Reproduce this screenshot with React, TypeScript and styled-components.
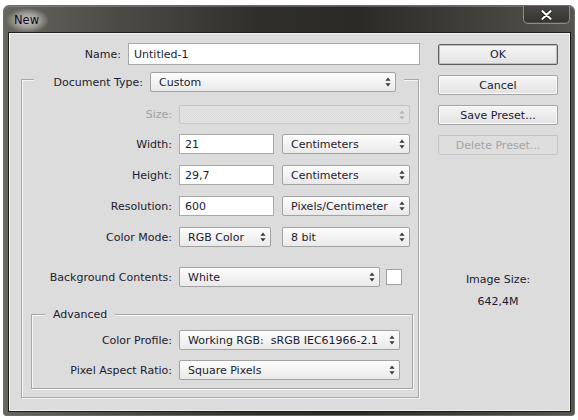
import React from "react";
import styled, { createGlobalStyle } from "styled-components";

const GlobalStyle = createGlobalStyle`
html, body {
	margin: 0;
	padding: 0;
	background: #ffffff;
}
body {
	font-family: "DejaVu Sans", "Liberation Sans", sans-serif;
	font-size: 11px;
	color: #1b1b2f;
}
`

const Arrows = ({ disabled }: { disabled?: boolean }) => (
	<svg width="6" height="10" viewBox="0 0 6 10">
		<path d="M3 0.5 L5.6 3.8 L0.4 3.8 Z M0.4 6.2 L5.6 6.2 L3 9.5 Z" fill={disabled ? "#b4b4b4" : "#3a3a3a"} />
	</svg>
);

const CloseGlyph = () => (
	<svg width="11" height="10" viewBox="0 0 11 10">
		<path d="M1.5 1.2 L9.5 8.8 M9.5 1.2 L1.5 8.8" stroke="#1a1a18" strokeWidth="3.6" strokeLinecap="round" />
		<path d="M1.5 1.2 L9.5 8.8 M9.5 1.2 L1.5 8.8" stroke="#ffffff" strokeWidth="2.2" strokeLinecap="round" />
	</svg>
);

export default function App() {
	return (
		<>
			<GlobalStyle />
			<Window>
				<TitleBar>
					<Title>New</Title>
					<CloseButton><CloseGlyph /></CloseButton>
				</TitleBar>
				<Client>
					<LeftColumn>
						<NameRow>
							<NameLabel>Name:</NameLabel>
							<TextField $w={292} $h={22} readOnly value="Untitled-1" />
						</NameRow>
						<GroupBox>
							<GroupHeader>
								<HeaderLabel>Document Type:</HeaderLabel>
								<Select $w={246}>
									<span>Custom</span>
									<Arrows />
								</Select>
							</GroupHeader>

							<FormRow $top={13} $label={150}>
								<Label $disabled>Size:</Label>
								<Select $w={231} $h={19} $disabled>
									<span />
									<Arrows disabled />
								</Select>
							</FormRow>
							<FormRow $top={10} $label={150}>
								<Label>Width:</Label>
								<Controls>
									<TextField $w={95} readOnly value="21" />
									<Select $w={128}>
										<span>Centimeters</span>
										<Arrows />
									</Select>
								</Controls>
							</FormRow>
							<FormRow $top={11} $label={150}>
								<Label>Height:</Label>
								<Controls>
									<TextField $w={95} readOnly value="29,7" />
									<Select $w={128}>
										<span>Centimeters</span>
										<Arrows />
									</Select>
								</Controls>
							</FormRow>
							<FormRow $top={11} $label={150}>
								<Label>Resolution:</Label>
								<Controls>
									<TextField $w={95} readOnly value="600" />
									<Select $w={128}>
										<span>Pixels/Centimeter</span>
										<Arrows />
									</Select>
								</Controls>
							</FormRow>
							<FormRow $top={11} $label={150}>
								<Label>Color Mode:</Label>
								<Controls>
									<Select $w={92}>
										<span>RGB Color</span>
										<Arrows />
									</Select>
									<Select $w={128} $gap={11}>
										<span>8 bit</span>
										<Arrows />
									</Select>
								</Controls>
							</FormRow>
							<FormRow $top={20} $label={150}>
								<Label>Background Contents:</Label>
								<Controls>
									<Select $w={201}>
										<span>White</span>
										<Arrows />
									</Select>
									<Swatch />
								</Controls>
							</FormRow>

							<AdvancedBox>
								<Legend>Advanced</Legend>
								<FormRow $top={8} $label={140}>
									<Label>Color Profile:</Label>
									<Select $w={221}>
										<span>Working RGB:&nbsp; sRGB IEC61966-2.1</span>
										<Arrows />
									</Select>
								</FormRow>
								<FormRow $top={10} $label={140}>
									<Label>Pixel Aspect Ratio:</Label>
									<Select $w={221}>
										<span>Square Pixels</span>
										<Arrows />
									</Select>
								</FormRow>
							</AdvancedBox>
						</GroupBox>
					</LeftColumn>

					<RightColumn>
						<Button $default>OK</Button>
						<Button>Cancel</Button>
						<Button>Save Preset...</Button>
						<Button disabled>Delete Preset...</Button>
						<SizeInfo>
							<span>Image Size:</span>
							<span>642,4M</span>
						</SizeInfo>
					</RightColumn>
				</Client>
			</Window>
		</>
	);
}

const Window = styled.div`
box-sizing: border-box;
width: 572px;
height: 411px;
margin: 5px 0 0 3px;
padding: 0 3px 3px 4px;
border: 1px solid #6e6c67;
border-radius: 6px 6px 3px 3px;
display: flex;
flex-direction: column;
background: linear-gradient(90deg, #67655f 0%, #4f4d48 18%, #2f2e2a 45%, #2b2a26 62%, #44423d 85%, #56544f 100%);
box-shadow: inset 0 1px 0 rgba(255, 255, 255, 0.18);
`

const TitleBar = styled.div`
height: 26px;
display: flex;
justify-content: space-between;
align-items: flex-start;
`

/* светлое свечение под заголовком, как в Aero */
const Title = styled.span`
margin: 2px 0 0 -2px;
padding: 5px 10px 6px 8px;
font-size: 11.5px;
line-height: 14px;
color: #0a0a26;
background: radial-gradient(closest-side, rgba(205, 204, 196, 0.95) 0%, rgba(185, 183, 176, 0.7) 55%, rgba(160, 158, 150, 0) 100%);
`

const CloseButton = styled.div`
box-sizing: border-box;
width: 47px;
height: 18px;
margin-right: 1px;
display: flex;
justify-content: center;
align-items: center;
border: 1px solid #8d8b86;
border-top: none;
border-radius: 0 0 5px 5px;
background: linear-gradient(#4a4843, #34332f);
box-shadow: inset 0 -1px 0 rgba(255, 255, 255, 0.12);
`

const Client = styled.div`
flex: 1;
display: flex;
padding-top: 10px;
border: 1px solid #1b1b19;
background: #dcdcdc;
box-shadow: inset 0 0 0 1px #f2f2f2;
`

const LeftColumn = styled.div`
width: 413px;
display: flex;
flex-direction: column;
`

const NameRow = styled.div`
display: flex;
align-items: center;
`

const NameLabel = styled.span`
width: 112px;
margin-right: 7px;
text-align: right;
`

const TextField = styled.input<{ $w: number; $h?: number }>`
box-sizing: border-box;
width: ${p => p.$w}px;
height: ${p => p.$h ?? 20}px;
margin: 0;
padding: 0 5px;
border: 1px solid #a9a9a9;
background: #ffffff;
font: inherit;
color: inherit;
outline: none;
`

const GroupBox = styled.div`
box-sizing: border-box;
width: 398px;
margin: 14px 0 0 12px;
padding-bottom: 8px;
border: 1px solid #a7a7a7;
box-shadow: inset 1px 1px 0 #f6f6f6, 1px 1px 0 #f6f6f6;
display: flex;
flex-direction: column;
`

const GroupHeader = styled.div`
width: 370px;
height: 20px;
margin: -8px 0 0 12px;
padding-right: 8px;
box-sizing: border-box;
display: flex;
align-items: center;
background: #dcdcdc;
`

const HeaderLabel = styled.span`
width: 109px;
margin-right: 7px;
text-align: right;
`

const FormRow = styled.div<{ $top: number; $label: number }>`
display: grid;
grid-template-columns: ${p => p.$label}px auto;
column-gap: 7px;
align-items: center;
margin-top: ${p => p.$top}px;
`

const Label = styled.span<{ $disabled?: boolean }>`
text-align: right;
white-space: nowrap;
color: ${p => (p.$disabled ? "#a2a2a2" : "#1b1b2f")};
`

const Controls = styled.div`
display: flex;
align-items: center;
gap: 8px;
`

const Select = styled.div<{ $w: number; $h?: number; $disabled?: boolean; $gap?: number }>`
box-sizing: border-box;
width: ${p => p.$w}px;
height: ${p => p.$h ?? 20}px;
margin-left: ${p => (p.$gap ? p.$gap - 8 : 0)}px;
padding: 0 4px 0 8px;
display: flex;
justify-content: space-between;
align-items: center;
white-space: nowrap;
border: 1px solid ${p => (p.$disabled ? "#c5c5c5" : "#a2a2a2")};
border-radius: 2px;
background: ${p =>
	p.$disabled
		? "repeating-conic-gradient(#e4e4e4 0% 25%, #dcdcdc 0% 50%) 0 0 / 2px 2px"
		: "linear-gradient(#fdfdfd, #e9e9e9)"};
`

const Swatch = styled.div`
width: 16px;
height: 16px;
margin-left: -2px;
box-sizing: border-box;
border: 1px solid #a2a2a2;
background: #ffffff;
`

const AdvancedBox = styled.div`
box-sizing: border-box;
width: 382px;
margin: 27px 0 0 9px;
padding-bottom: 8px;
border: 1px solid #a7a7a7;
box-shadow: inset 1px 1px 0 #f6f6f6, 1px 1px 0 #f6f6f6;
display: flex;
flex-direction: column;
`

const Legend = styled.span`
align-self: flex-start;
margin: -8px 0 0 13px;
padding: 0 8px;
line-height: 15px;
background: #dcdcdc;
`

const RightColumn = styled.div`
width: 120px;
margin: 1px 0 0 16px;
display: flex;
flex-direction: column;
gap: 10px;
`

const Button = styled.button<{ $default?: boolean }>`
box-sizing: border-box;
width: 120px;
height: ${p => (p.$default ? 21 : 20)}px;
margin: 0;
padding: 0;
font: inherit;
color: #1b1b2f;
border: 1px solid ${p => (p.$default ? "#5e5e5e" : "#a4a4a4")};
border-radius: 2px;
background: linear-gradient(#f6f6f6, #e2e2e2);
box-shadow: ${p => (p.$default ? "inset 0 0 0 1px #bdbdbd" : "inset 0 0 0 1px #fbfbfb")};

&:disabled {
	color: #a4a4a4;
	border-color: #c4c4c4;
	background: #dedede;
	box-shadow: none;
}
`

const SizeInfo = styled.div`
margin-top: 104px;
display: flex;
flex-direction: column;
align-items: center;
line-height: 22px;
`
